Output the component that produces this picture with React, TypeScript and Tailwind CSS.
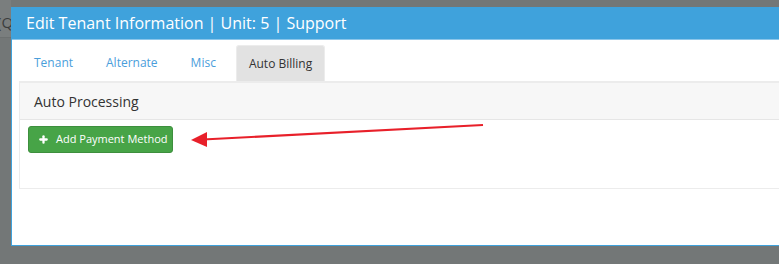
import { Plus } from "lucide-react";

const tabs = ["Tenant", "Alternate", "Misc", "Auto Billing"];

export default function App() {
  return (
    <div className="relative h-[264px] w-[779px] overflow-hidden bg-[#737777] font-['Open_Sans',sans-serif]">
      {/* page behind the overlay */}
      <div className="flex h-[38px] w-[11px] items-center overflow-hidden border-b border-[#6c7070] bg-[#7a7e7e] pt-[7px]">
        <span className="-ml-[3px] text-[15px] leading-none text-[#3a3d3d]">(Q</span>
      </div>

      {/* modal */}
      <div className="absolute left-[11px] top-[7px] w-[820px] border border-[#3fa2dc] bg-white">
        <div className="flex h-[31px] items-center bg-[#3fa2dc] pb-[1px] pl-[14px] text-[16px] text-white">
          Edit Tenant Information | Unit: 5 | Support
        </div>
        <div className="border-t border-[#8cc6ea] px-[7px] pb-[56px] pt-[5px]">
          <div className="flex gap-[7px] pl-[2px]">
            {tabs.map((t) => (
              <div
                key={t}
                className={
                  t === "Auto Billing"
                    ? "flex h-[36px] items-center rounded-t-[3px] border border-b-0 border-[#ececec] bg-[#e2e2e2] px-[12px] text-[12px] text-[#333]"
                    : "flex h-[36px] items-center px-[13px] text-[12px] text-[#4a9edb]"
                }
              >
                {t}
              </div>
            ))}
          </div>
          <div className="border-2 border-t-[2px] border-[#ececec] border-l-[1px] border-b-[1px]">
            <div className="flex h-[37px] items-center border-b border-[#e6e6e6] bg-[#f7f7f7] pl-[14px] text-[14px] text-[#333]">
              Auto Processing
            </div>
            <div className="h-[68px] px-[8px] pt-[6px]">
              <button className="flex h-[27px] w-[145px] items-center rounded-[3px] border border-[#3d8f3d] bg-[#47a447] pl-[9px] text-[11px] text-white">
                <Plus size={11} strokeWidth={5} className="mr-[7px]" />
                Add Payment Method
              </button>
            </div>
          </div>
        </div>
      </div>

      {/* annotation arrow */}
      <svg className="absolute left-0 top-0" width="779" height="264">
        <line x1="483" y1="125" x2="203" y2="139.5" stroke="#e8202a" strokeWidth="2.2" />
        <polygon points="191,140 207,132 207,147" fill="#e8202a" />
      </svg>
    </div>
  );
}
